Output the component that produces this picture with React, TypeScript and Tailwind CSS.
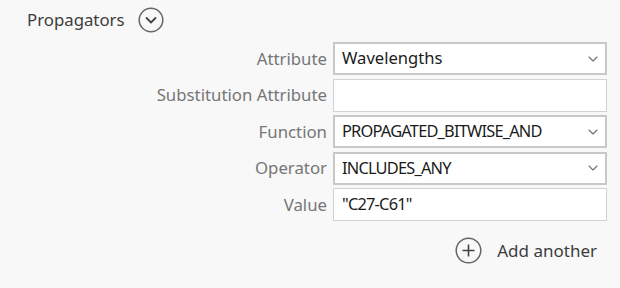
import { ChevronDown } from 'lucide-react'

interface FieldProps {
  label: string
  value?: string
  select?: boolean
}

function Field({ label, value = '', select = false }: FieldProps) {
  // upper-case values run narrower in the original font
  const caps = value === value.toUpperCase() && /[A-Z]/.test(value)
  return (
    <div className="flex items-center gap-[6px]">
      <span className="text-[16.8px] text-[#767676] text-right">{label}</span>
      <div
        className={
          select
            ? 'w-[274px] h-[33px] bg-white border-2 border-[#c8c8c8] flex items-center justify-between pl-[7px] pr-[4px]'
            : 'w-[274px] h-[33px] bg-white border border-[#d2d2d2] flex items-center pl-[8px]'
        }
      >
        <span className={caps ? 'text-[16.4px] text-[#1b1b1b] tracking-[-0.8px]' : 'text-[16.6px] text-[#1b1b1b]'}>
          {value}
        </span>
        {select && <ChevronDown className="w-[16px] h-[16px] text-[#707070]" strokeWidth={1.7} />}
      </div>
    </div>
  )
}

export default function App() {
  return (
    <div
      className="w-[620px] h-[288px] bg-[#f8f8f8] overflow-hidden"
      style={{ fontFamily: '"Noto Sans", "Open Sans", sans-serif' }}
    >
      {/* Header */}
      <div className="flex items-center gap-[13px] pl-[27px] pt-[7px]">
        <span className="text-[16.8px] text-[#3c3c3c]">Propagators</span>
        <svg width="26" height="26" viewBox="0 0 26 26" fill="none">
          <circle cx="13" cy="13" r="11.8" stroke="#666" strokeWidth="1.5" />
          <path d="M8.5 11 L13 15.5 L17.5 11" stroke="#444" strokeWidth="1.8" strokeLinecap="round" strokeLinejoin="round" />
        </svg>
      </div>

      {/* Form */}
      <div className="flex flex-col items-end gap-[3.5px] pr-[13px] mt-[9px]">
        <Field label="Attribute" value="Wavelengths" select />
        <Field label="Substitution Attribute" />
        <Field label="Function" value="PROPAGATED_BITWISE_AND" select />
        <Field label="Operator" value="INCLUDES_ANY" select />
        <Field label="Value" value={'"C27-C61"'} />
      </div>

      {/* Add another */}
      <div className="flex justify-end pr-[23px] mt-[16px]">
        <div className="flex items-center gap-[15px]">
          <svg width="27" height="27" viewBox="0 0 27 27" fill="none">
            <circle cx="13.5" cy="13.5" r="12.3" stroke="#666" strokeWidth="1.5" />
            <path d="M13.5 7.5 V19.5 M7.5 13.5 H19.5" stroke="#444" strokeWidth="1.6" />
          </svg>
          <span className="text-[17px] text-[#3c3c3c]">Add another</span>
        </div>
      </div>
    </div>
  )
}
